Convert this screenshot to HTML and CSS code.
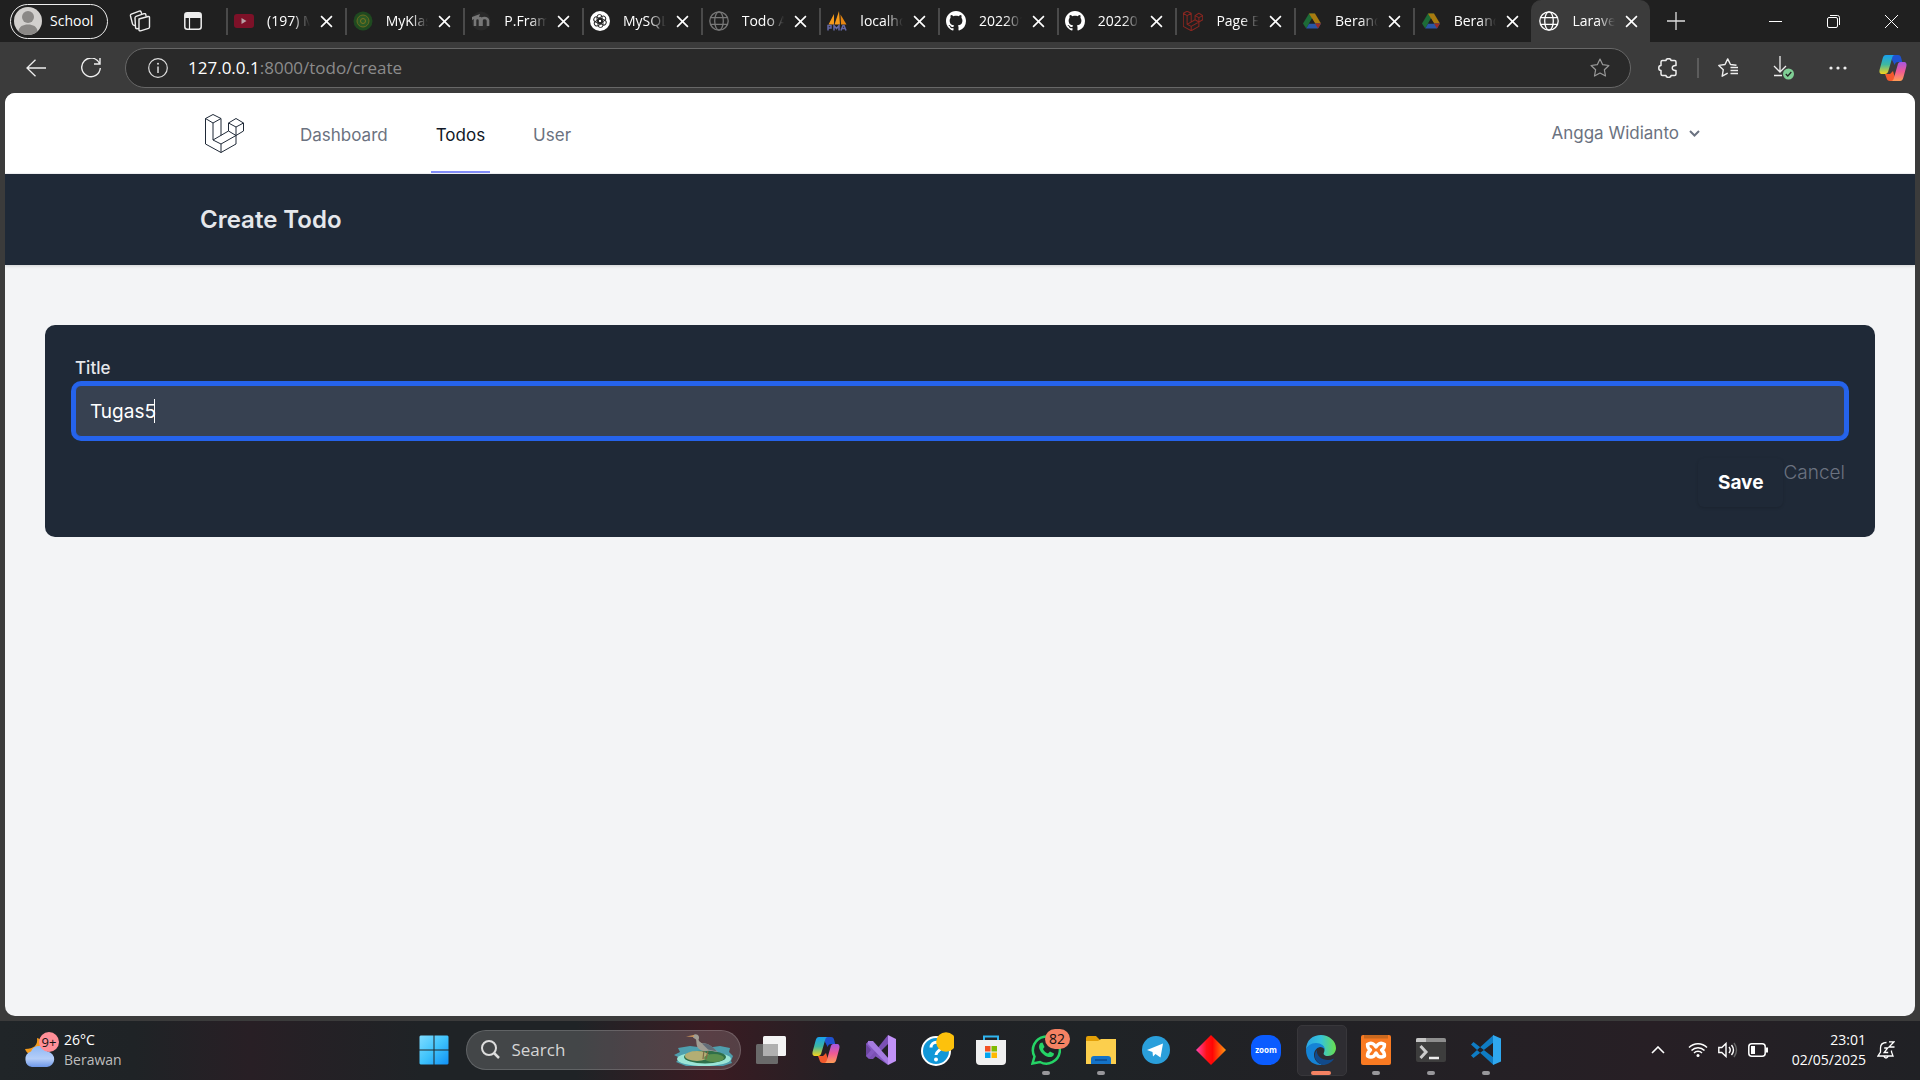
FILE: index.html
```html
<!DOCTYPE html>
<html lang="en">
<head>
<meta charset="utf-8">
<meta name="viewport" content="width=device-width, initial-scale=1">
<title>Laravel</title>
<link rel="stylesheet" href="styles.css">
</head>
<body>
<svg class="defs" width="0" height="0" aria-hidden="true">
  <defs>
    <symbol id="i-close" viewBox="0 0 12 12"><path d="M1 1l10 10M11 1L1 11" fill="none" stroke="currentColor" stroke-width="1.5"/></symbol>
    <symbol id="i-globe" viewBox="0 0 20 20"><g fill="none" stroke="currentColor" stroke-width="1.3"><circle cx="10" cy="10" r="9.2"/><ellipse cx="10" cy="10" rx="4.3" ry="9.2"/><path d="M1.6 6.6h16.8M1.6 13.4h16.8"/></g></symbol>
    <symbol id="i-github" viewBox="0 0 16 16"><path fill="currentColor" d="M8 0C3.58 0 0 3.58 0 8c0 3.54 2.29 6.53 5.47 7.59.4.07.55-.17.55-.38 0-.19-.01-.82-.01-1.49-2.01.37-2.53-.49-2.69-.94-.09-.23-.48-.94-.82-1.13-.28-.15-.68-.52-.01-.53.63-.01 1.08.58 1.23.82.72 1.21 1.87.87 2.33.66.07-.52.28-.87.51-1.07-1.78-.2-3.64-.89-3.64-3.95 0-.87.31-1.59.82-2.15-.08-.2-.36-1.02.08-2.12 0 0 .67-.21 2.2.82.64-.18 1.32-.27 2-.27s1.36.09 2 .27c1.53-1.04 2.2-.82 2.2-.82.44 1.1.16 1.92.08 2.12.51.56.82 1.27.82 2.15 0 3.07-1.87 3.75-3.65 3.95.29.25.54.73.54 1.48 0 1.07-.01 1.93-.01 2.2 0 .21.15.46.55.38A8.01 8.01 0 0 0 16 8c0-4.42-3.58-8-8-8z"/></symbol>
    <symbol id="i-drive" viewBox="0 0 20 20"><path d="M7 2.5h6L7.2 12.6l-3 5L1 12.600z" fill="#1d6b37"/><path d="M7 2.500h6l6 10.100h-6z" fill="#a87b10"/><path d="M4.200 17.600l3-5H19l-3 5z" fill="#2a55a5"/><path d="M13 12.600h6l-3 5z" fill="#9c2c24"/><path d="M10 7.500l3 5.100H7.100z" fill="#202020"/></symbol>
    <symbol id="i-laravel" viewBox="0 0 39 39"><path fill="none" stroke="currentColor" stroke-linejoin="round" d="M8 .5l8 4L8 9 .5 4.500zM.5 4.500V30L16 38.500 31 30V13M16 38.500V30M8 9v17l8 4 15-8.500M16 4.500v17M8 26l15.500-9M31 4.500l7.500 4.500L31 13l-7.500-4zM23.500 9v8l7.500 4.500 7.500-4.500V9"/></symbol>
    <linearGradient id="cp-a" x1="0" y1="0" x2="0" y2="1"><stop offset="0" stop-color="#18a0ee"/><stop offset=".5" stop-color="#3fb8a0"/><stop offset="1" stop-color="#f6d31b"/></linearGradient>
    <linearGradient id="cp-b" x1="0" y1="0" x2="0" y2="1"><stop offset="0" stop-color="#a556e0"/><stop offset=".5" stop-color="#ef5a95"/><stop offset="1" stop-color="#ff9d55"/></linearGradient>
    <symbol id="i-copilot" viewBox="0 0 28 26"><path d="M13 0h6c2 0 2.700 1.200 3.200 3l1 4h-4c-2 0-3 1-3.500 3L13 5z" fill="#1f52d0"/><path d="M6 19h5l3-3 3 10h-6c-2 0-3-1-3.500-3z" fill="#f2592d"/><path d="M7 0h9c-2 0-2.500 1.500-3 3.500l-3.500 12C9 17.500 8 19 6 19H3.500C.5 19 0 17 .8 14L3.500 4C4.200 1.500 5 0 7 0z" fill="url(#cp-a)"/><path d="M21.500 7h3c3 0 3.500 2 2.700 5l-2.700 10c-.7 2.500-1.500 4-3.500 4h-9c2 0 2.500-1.500 3-3.500l3.500-12C19 8.500 19.500 7 21.500 7z" fill="url(#cp-b)"/></symbol>
  </defs>
</svg>

<header class="browser">
  <div class="tabstrip">
    <button class="profile" type="button">
      <svg width="28" height="28" viewBox="0 0 28 28"><circle cx="14" cy="14" r="14" fill="#d2d0ce"/><circle cx="14" cy="10" r="6" fill="#8a8886"/><path d="M4.500 24.200C5 19.500 9 17.500 14 17.500s9 2 9.500 6.700A14 14 0 0 1 4.500 24.200z" fill="#8a8886"/></svg>
      <span>School</span>
    </button>
    <button class="strip-btn" type="button" aria-label="Workspaces"><svg width="22" height="22" viewBox="0 0 22 22" fill="none" stroke="#eee" stroke-width="1.400" stroke-linejoin="round"><path d="M10 9l9-2.500q1.500-.3 1.500 1V17q0 1-1 1.400l-8 2.400q-1.500.3-1.500-1z"/><path d="M10 18.500l-2 .2q-1.500 0-1.500-1.500L6 8q0-1.300 1-1.700l8-2.600q1.500-.4 1.800.8l.3 2"/><path d="M6.500 15.500l-1.500-.2q-1.200-.3-1.500-1.500L1.500 6q-.3-1.300.8-1.900l8-3q1.300-.4 1.800.8l.6 2"/></svg></button>
    <button class="strip-btn" type="button" aria-label="Tab actions"><svg width="18" height="18" viewBox="0 0 18 18"><rect x=".8" y=".8" width="16.400" height="16.400" rx="2.500" fill="none" stroke="#eee" stroke-width="1.500"/><path d="M1 1h16v5H1z" fill="#eee"/><path d="M5.500 6v11" stroke="#eee" stroke-width="1.200"/></svg></button>
    <nav class="tabs" aria-label="Tabs">
      <div class="tab"><svg class="fav" viewBox="0 0 20 20"><rect y="3" width="20" height="14" rx="3" fill="#7d1128"/><path d="M7.500 7v6l5-3z" fill="#b9a0a5"/></svg><span class="tab-title">(197) MySQL</span><button class="tab-close" type="button" aria-label="Close tab"><svg><use href="#i-close"/></svg></button></div>
      <div class="tab"><svg class="fav" viewBox="0 0 20 20"><circle cx="10" cy="10" r="9.500" fill="#1f4a20"/><circle cx="10" cy="10" r="6" fill="#2b5a26" stroke="#6b6a20"/><circle cx="10" cy="10" r="2.500" fill="none" stroke="#7a7320"/></svg><span class="tab-title">MyKlass</span><button class="tab-close" type="button" aria-label="Close tab"><svg><use href="#i-close"/></svg></button></div>
      <div class="tab"><svg class="fav" viewBox="0 0 20 20"><circle cx="10" cy="10" r="9.500" fill="#292929"/><path d="M4 15V9.500Q4 7 6.500 7T9 9.500V15M10.500 15V9.500Q10.500 7 8.500 7M10.500 15V9.500Q10.500 7 13.500 7T17 9.500V15" fill="none" stroke="#777" stroke-width="2.600"/><path d="M1 6l8-3-1 3-7 3z" fill="#777"/></svg><span class="tab-title">P.Framework</span><button class="tab-close" type="button" aria-label="Close tab"><svg><use href="#i-close"/></svg></button></div>
      <div class="tab"><svg class="fav" viewBox="0 0 20 20"><circle cx="10" cy="10" r="10" fill="#fff"/><g fill="none" stroke="#222" stroke-width=".9"><rect x="7" y="3.500" width="5" height="8.500" rx="2.500"/><rect x="7" y="3.500" width="5" height="8.500" rx="2.500" transform="rotate(60 10 10)"/><rect x="7" y="3.500" width="5" height="8.500" rx="2.500" transform="rotate(120 10 10)"/><rect x="7" y="3.500" width="5" height="8.500" rx="2.500" transform="rotate(180 10 10)"/><rect x="7" y="3.500" width="5" height="8.500" rx="2.500" transform="rotate(240 10 10)"/><rect x="7" y="3.500" width="5" height="8.500" rx="2.500" transform="rotate(300 10 10)"/></g></svg><span class="tab-title">MySQL</span><button class="tab-close" type="button" aria-label="Close tab"><svg><use href="#i-close"/></svg></button></div>
      <div class="tab"><svg class="fav dim"><use href="#i-globe"/></svg><span class="tab-title">Todo App</span><button class="tab-close" type="button" aria-label="Close tab"><svg><use href="#i-close"/></svg></button></div>
      <div class="tab"><svg class="fav" viewBox="0 0 20 20"><path d="M1.500 13.500L7 3v10.500zM7.500 13.500L12 0l1 13.500z" fill="#f59a1b"/><path d="M13.500 3.500L19.500 13.500H14z" fill="#e5850f"/><path d="M1 19.500v-5h3v2.500H1M7 19.500v-5l2.500 3 2.500-3v5M14 19.500l2-5h1l2 5M14.500 17.500h4" fill="none" stroke="#6468a5" stroke-width="1.500"/></svg><span class="tab-title">localhost</span><button class="tab-close" type="button" aria-label="Close tab"><svg><use href="#i-close"/></svg></button></div>
      <div class="tab"><svg class="fav"><use href="#i-github"/></svg><span class="tab-title">2022010</span><button class="tab-close" type="button" aria-label="Close tab"><svg><use href="#i-close"/></svg></button></div>
      <div class="tab"><svg class="fav"><use href="#i-github"/></svg><span class="tab-title">2022010</span><button class="tab-close" type="button" aria-label="Close tab"><svg><use href="#i-close"/></svg></button></div>
      <div class="tab"><svg class="fav laravel-red"><use href="#i-laravel"/></svg><span class="tab-title">Page Expired</span><button class="tab-close" type="button" aria-label="Close tab"><svg><use href="#i-close"/></svg></button></div>
      <div class="tab"><svg class="fav"><use href="#i-drive"/></svg><span class="tab-title">Beranda</span><button class="tab-close" type="button" aria-label="Close tab"><svg><use href="#i-close"/></svg></button></div>
      <div class="tab"><svg class="fav"><use href="#i-drive"/></svg><span class="tab-title">Beranda</span><button class="tab-close" type="button" aria-label="Close tab"><svg><use href="#i-close"/></svg></button></div>
      <div class="tab active"><svg class="fav"><use href="#i-globe"/></svg><span class="tab-title">Laravel</span><button class="tab-close" type="button" aria-label="Close tab"><svg><use href="#i-close"/></svg></button></div>
    </nav>
    <button class="strip-btn newtab" type="button" aria-label="New tab"><svg width="18" height="18" viewBox="0 0 18 18"><path d="M9 0v18M0 9h18" stroke="#ddd" stroke-width="1.300"/></svg></button>
    <div class="window-controls">
      <button type="button" aria-label="Minimize"><svg width="13" height="13" viewBox="0 0 13 13"><path d="M0 6.500h13" stroke="#fff"/></svg></button>
      <button type="button" aria-label="Restore"><svg width="13" height="13" viewBox="0 0 13 13" fill="none" stroke="#fff"><rect x=".5" y="2.500" width="10" height="10" rx="1.500"/><path d="M3 .5h7.500q2 0 2 2V10"/></svg></button>
      <button type="button" aria-label="Close"><svg width="13" height="13" viewBox="0 0 13 13"><path d="M0 0l13 13M13 0L0 13" stroke="#fff"/></svg></button>
    </div>
  </div>
  <div class="toolbar">
    <button class="tool" type="button" aria-label="Back"><svg width="20" height="18" viewBox="0 0 20 18" fill="none" stroke="#eee" stroke-width="1.300"><path d="M20 9H1M9.500 .8L1 9l8.500 8.200"/></svg></button>
    <button class="tool" type="button" aria-label="Refresh"><svg width="20" height="20" viewBox="0 0 20 20" fill="none" stroke="#eee" stroke-width="1.400"><path d="M18.500 5.500A9.300 9.300 0 1 0 19.300 10M19 0v6h-6"/></svg></button>
    <div class="address">
      <svg width="20" height="20" viewBox="0 0 20 20"><circle cx="10" cy="10" r="9.300" fill="none" stroke="#ddd" stroke-width="1.200"/><path d="M10 8.500V15" stroke="#ddd" stroke-width="1.500"/><circle cx="10" cy="5.800" r="1" fill="#ddd"/></svg>
      <span class="url"><span class="host">127.0.0.1</span>:8000/todo/create</span>
      <svg width="20" height="20" viewBox="0 0 20 20"><path d="M10 1l2.700 5.700 6.200.8-4.500 4.300 1.100 6.200L10 15l-5.500 3 1.100-6.200L1.100 7.500l6.200-.8z" fill="none" stroke="#999" stroke-width="1.200" stroke-linejoin="round"/></svg>
    </div>
    <div class="tools">
      <button class="tool" type="button" aria-label="Extensions"><svg width="20" height="20" viewBox="0 0 20 20" fill="none" stroke="#eee" stroke-width="1.500" stroke-linejoin="round"><path d="M4.500 2.500H8C8 0 13 0 13 2.500h3.500q1.500 0 1.500 1.500v3.500c-5-.8-5 5.800 0 5V16q0 1.500-1.500 1.500H13c0 2.500-5 2.500-5 0H4.500Q3 17.500 3 16v-3.500c-3 0-3-5 0-5V4q0-1.500 1.500-1.500z"/></svg></button>
      <span class="divider"></span>
      <button class="tool" type="button" aria-label="Favorites"><svg width="20" height="20" viewBox="0 0 20 20" fill="none" stroke="#eee" stroke-width="1.400" stroke-linejoin="round"><path d="M18.500 7.200L12.500 6.500 9.700.9 7 6.500.8 7.400l4.500 4.300-1.100 6.500 5.500-3M12.500 9.500H20M12.500 12.500H20M12.500 15.500H20"/></svg></button>
      <button class="tool" type="button" aria-label="Downloads"><svg width="24" height="26" viewBox="0 0 24 26"><path d="M9 1v15M3 11l6 6 6-6M3 20.500h8" fill="none" stroke="#eee" stroke-width="1.300"/><circle cx="17.500" cy="19" r="5.500" fill="#7fcf95"/><path d="M14.800 19l2 2 3.500-4" fill="none" stroke="#222" stroke-width="1.200"/></svg></button>
      <button class="tool" type="button" aria-label="Settings and more"><svg width="18" height="4" viewBox="0 0 18 4" fill="#eee"><circle cx="2" cy="2" r="1.600"/><circle cx="9" cy="2" r="1.600"/><circle cx="16" cy="2" r="1.600"/></svg></button>
      <button class="tool" type="button" aria-label="Copilot"><svg width="28" height="26"><use href="#i-copilot"/></svg></button>
    </div>
  </div>
</header>

<div class="viewport">
  <nav class="site-nav">
    <div class="container nav-row">
      <a class="logo" href="#" aria-label="Home"><svg width="39" height="39"><use href="#i-laravel"/></svg></a>
      <a class="nav-link" href="#">Dashboard</a>
      <a class="nav-link current" href="#" aria-current="page">Todos</a>
      <a class="nav-link" href="#">User</a>
      <button class="user-menu" type="button">Angga Widianto <svg width="11" height="7" viewBox="0 0 11 7"><path d="M1 1l4.500 4.500L10 1" fill="none" stroke="currentColor" stroke-width="2"/></svg></button>
    </div>
  </nav>
  <div class="page-header"><div class="container"><h1>Create Todo</h1></div></div>
  <main>
    <form class="card" onsubmit="return false">
      <label for="title">Title</label>
      <div class="field"><input id="title" type="text" value="Tugas5" autocomplete="off"><span class="caret"></span></div>
      <div class="actions"><button class="save" type="submit">Save</button><a class="cancel" href="#">Cancel</a></div>
    </form>
  </main>
</div>

<footer class="taskbar">
  <div class="weather">
    <svg width="36" height="38" viewBox="0 0 36 38"><defs><linearGradient id="cl" x1="0" y1="0" x2="0" y2="1"><stop offset="0" stop-color="#8fb8f5"/><stop offset=".6" stop-color="#b5cef8"/><stop offset="1" stop-color="#6d97e8"/></linearGradient></defs><path d="M14 7c1 7-3 11-12 11 2 5 5 6 9 6l9-9c0-4-2-7-6-8z" fill="#f39a1c"/><path d="M9 36a8 8 0 0 1-1-15.500 9 9 0 0 1 16.500 0A7.800 7.800 0 0 1 24 36z" fill="url(#cl)"/><circle cx="26" cy="11" r="10" fill="#ff8f98"/><text x="26" y="16" text-anchor="middle" font-size="13" fill="#111">9+</text></svg>
    <div class="weather-text"><span>26°C</span><span class="muted">Berawan</span></div>
  </div>
  <div class="dock">
    <button class="app" type="button" aria-label="Start"><svg width="30" height="30" viewBox="0 0 30 30"><defs><linearGradient id="wn" x1="0" y1="0" x2="1" y2="1"><stop offset="0" stop-color="#7fdcff"/><stop offset=".5" stop-color="#3fc3fc"/><stop offset="1" stop-color="#1090f5"/></linearGradient></defs><path d="M1.500.5H14.500V14.500H.5V1.500zM15.500.5h13l1 1v13h-14zM.5 15.500h14v14h-13l-1-1zM15.500 15.500h14v13l-1 1h-13z" fill="url(#wn)"/></svg></button>
    <button class="search" type="button">
      <svg width="19" height="19" viewBox="0 0 19 19" fill="none" stroke="#ddd" stroke-width="2"><circle cx="8" cy="8" r="7"/><path d="M13 13l5 5" stroke-width="2.500"/></svg>
      <span>Search</span>
      <svg width="60" height="34" viewBox="0 0 60 34"><path d="M4 15l12-2 16 2 14-2 10 2-1 4 4 4-2 5 1 2-9 3H12L2 29l4-4-6-3 6-3z" fill="#4f9fae"/><ellipse cx="30" cy="26" rx="27" ry="7" fill="#9be5d6"/><ellipse cx="31" cy="24" rx="21" ry="6.500" fill="#2f6f49"/><ellipse cx="23" cy="23" rx="12" ry="5" fill="#b3ae74"/><ellipse cx="40" cy="25" rx="10" ry="4" fill="#5a8f4e"/><path d="M30 17l-1 9M34 18l-2 8" stroke="#7d6b46" stroke-width="1.200"/><path d="M19 2.500q2-1.800 4.500-.8 2.500 1.800 1 5 0 1.500 3 3.300 6 0 10 3.500l6.500 5.500-9-1.500c-6 2-11-1-12-4.500-.8-2.500-.5-4.500-1-6.500l-3-2z" fill="#a09d93"/><path d="M28 10.500c5-.8 9 2 15 8l-9-2z" fill="#626d78"/><path d="M12 3.500l8-1.500v2z" fill="#c9955c"/></svg>
    </button>
    <button class="app" type="button" aria-label="Task view"><svg width="30" height="30" viewBox="0 0 30 30"><rect y="9" width="22" height="20" rx="1.500" fill="#6a6a6a"/><rect x="7" y="1" width="23" height="20" rx="1.500" fill="#f4f4f4"/><path d="M7 9h15v12H7z" fill="#b0b0b0"/></svg></button>
    <button class="app" type="button" aria-label="Copilot"><svg width="28" height="26"><use href="#i-copilot"/></svg></button>
    <button class="app" type="button" aria-label="Visual Studio"><svg width="30" height="30" viewBox="0 0 30 30"><path d="M0 9l3-3 9 7.500L4 24l-4-3z" fill="#6b45a0"/><path d="M0 9l3-3.500L22 30 7 19.500 3 24 0 21l5-6z" fill="#8458c0"/><path d="M3 24l19-24v9L7 24z" fill="#7b50b5"/><path d="M2 6h5l16 18-1 6L2 9z" fill="#a57be0"/><path d="M22 0l8 4v22l-8 4z" fill="#c292f8"/></svg></button>
    <button class="app" type="button" aria-label="Get Help"><svg width="36" height="36" viewBox="0 0 36 36"><circle cx="18" cy="19" r="14" fill="#1197d8" stroke="#fff" stroke-width="2"/><path d="M13 15.500c0-7 11-7 10 0-.5 3.500-5 3.500-5 7.500" fill="none" stroke="#fff" stroke-width="3"/><circle cx="18" cy="27.500" r="2" fill="#fff"/><circle cx="28" cy="10" r="9.800" fill="#fdc10c"/></svg></button>
    <button class="app" type="button" aria-label="Store"><svg width="30" height="30" viewBox="0 0 30 30"><path d="M8 6V1.500h14V6" fill="none" stroke="#30b5f0" stroke-width="2"/><path d="M0 5h30v21q0 4-4 4H4q-4 0-4-4z" fill="#f0f0f0"/><path d="M9 11h5.500v5.500H9z" fill="#f25022"/><path d="M15.500 11H21v5.500h-5.500z" fill="#7fba00"/><path d="M9 17.500h5.500V23H9z" fill="#00a4ef"/><path d="M15.500 17.500H21V23h-5.500z" fill="#ffb900"/></svg></button>
    <button class="app running" type="button" aria-label="WhatsApp"><svg width="30" height="30" viewBox="0 0 30 30"><path d="M1.500 28.500l2-7A13.500 13.500 0 1 1 9 27z" fill="#1f2326" stroke="#25d366" stroke-width="2.500"/><path d="M9.500 8l2-.500 2 4.500-1.500 2c1 2 2.500 3.500 5 4.500l2-2 4 2c0 3-3 4-5.500 3.500C13 21 8.500 16.500 8 12c0-1.500.5-3 1.500-4z" fill="#25d366"/></svg><span class="badge">82</span></button>
    <button class="app running" type="button" aria-label="File Explorer"><svg width="30" height="28" viewBox="0 0 30 28"><path d="M0 2q0-2 2-2h8l4 4v4H0z" fill="#e3a008"/><path d="M0 5h12l3-2h15v25H0z" fill="#fccf4d"/><path d="M5 28v-5q0-3 3-3h14q3 0 3 3v5z" fill="#1473c8"/><path d="M9 24h12" stroke="#0b4a8f" stroke-width="1.500"/></svg></button>
    <button class="app" type="button" aria-label="Telegram"><svg width="28" height="28" viewBox="0 0 28 28"><circle cx="14" cy="14" r="14" fill="#2a9fdb"/><path d="M5 14l16-6.500-2.500 14-5-3.500-2.500 2.500-.5-4.500z" fill="#fff"/></svg></button>
    <button class="app" type="button" aria-label="Diamond"><svg width="30" height="30" viewBox="0 0 30 30"><defs><linearGradient id="dm"><stop offset="0" stop-color="#ff45b0"/><stop offset=".35" stop-color="#ff1218"/><stop offset=".55" stop-color="#ff0505"/><stop offset="1" stop-color="#ff9a10"/></linearGradient></defs><path d="M15 0l15 15-15 15L0 15z" fill="url(#dm)"/></svg></button>
    <button class="app" type="button" aria-label="Zoom"><svg width="30" height="30" viewBox="0 0 30 30"><rect width="30" height="30" rx="12" fill="#0b5cff"/><text x="15" y="18" text-anchor="middle" font-size="8" font-weight="700" fill="#fff">zoom</text></svg></button>
    <button class="app selected" type="button" aria-label="Edge"><svg width="30" height="30" viewBox="0 0 30 30"><defs><linearGradient id="eg"><stop offset="0" stop-color="#2aa5e5"/><stop offset=".5" stop-color="#36c3d8"/><stop offset="1" stop-color="#6ae04b"/></linearGradient></defs><path d="M0 15C0 5 7 0 15 0s15 6 15 13c0 5-4 8-8 8-4 0-5-2-4-3.500C20 13 16 9 11 9 5 9 1 12 0 15z" fill="url(#eg)"/><path d="M0 15C1 11 5 8 10 8c5 0 9 3 9 7-1-2-3-3-5-3-4 1-6 4-6 8 0 5 4 9 9 9.800C6 31 0 24 0 15z" fill="#1583d6"/><path d="M11 15c-1 6 5 10 11 10 2 0 4-.5 6-1.500-2 4-7 6.500-11.500 6.500C10 28 6 20 11 15z" fill="#114a8b"/></svg></button>
    <button class="app running" type="button" aria-label="XAMPP"><svg width="30" height="30" viewBox="0 0 30 30"><rect width="30" height="30" rx="2" fill="#f97a22"/><path d="M3 0h24v3.500H3z" fill="#c9681e"/><path d="M6.500 9.500Q10 7 13 9.500L15 12l2-2.500Q20 7 23.500 9.500q0 4-3 5.500 3 2 3 6-3.500 2-6.500 0L15 18l-2 3q-3 2-6.500 0 0-4 3-6-3-1.500-3-5.500z" fill="none" stroke="#fff" stroke-width="3.400" stroke-linejoin="round"/></svg></button>
    <button class="app running" type="button" aria-label="Terminal"><svg width="30" height="24" viewBox="0 0 30 24"><rect width="30" height="24" rx="2" fill="#3d3d3d"/><path d="M0 4V2q0-2 2-2h26q2 0 2 2v2z" fill="#8e8e8e"/><path d="M0 4V2q0-2 2-2h8v4z" fill="#c5c5c5"/><path d="M4.500 8l5.500 6-5.500 6" fill="none" stroke="#ccc" stroke-width="3"/><path d="M13 20h10" stroke="#eee" stroke-width="2.500"/></svg></button>
    <button class="app running" type="button" aria-label="VS Code"><svg width="30" height="30" viewBox="0 0 30 30"><path d="M0 9.500L2.500 7l20 15.500V30zM0 20.500L2.500 23l20-15.500V0z" fill="#0f7cc4"/><path d="M22 0l8 3.500v23L22 30z" fill="#2fa8f0"/></svg></button>
  </div>
  <div class="tray">
    <svg width="14" height="8" viewBox="0 0 14 8"><path d="M1 7l6-6 6 6" fill="none" stroke="#fff" stroke-width="1.600"/></svg>
    <div class="status">
      <svg width="20" height="16" viewBox="0 0 20 16" fill="none" stroke="#fff" stroke-width="1.500"><path d="M1 5.500a12.700 12.700 0 0 1 18 0M3.500 8.500a9 9 0 0 1 13 0M6 11a5.700 5.700 0 0 1 8 0"/><circle cx="10" cy="13.500" r="1.500" fill="#fff" stroke="none"/></svg>
      <svg width="20" height="16" viewBox="0 0 20 16" fill="none" stroke="#fff" stroke-width="1.400"><path d="M.8 5.500h3L8 1.500v13l-4.200-4h-3zM11 5q2.500 3 0 6M13.500 3q4 5 0 10"/><path d="M16 1q5 7 0 14" stroke="#666"/></svg>
      <svg width="20" height="14" viewBox="0 0 20 14"><rect x=".8" y=".8" width="16.400" height="12.400" rx="3" fill="none" stroke="#fff" stroke-width="1.500"/><path d="M3 3h4v8H3zM18 4.500h2v5h-2z" fill="#fff"/></svg>
    </div>
    <div class="clock"><span>23:01</span><span>02/05/2025</span></div>
    <svg width="18" height="18" viewBox="0 0 18 18" fill="none" stroke="#fff" stroke-width="1.300"><path d="M9.500 1.500C5.500 1.500 3.500 4 3.500 7v4L1 15h15l-1.500-4V9.500M6.500 15q2.500 4 5 0M12 .8h5L12 6h5.500M7.200 7h3.500l-3.500 4.500h4"/></svg>
  </div>
</footer>
</body>
</html>
```
FILE: styles.css
```css
* { box-sizing: border-box; }

body {
  margin: 0;
  min-height: 100vh;
  display: flex;
  flex-direction: column;
  background: #3b3b3b;
  color: #fff;
  font-family: "Open Sans", "Noto Sans", sans-serif;
  font-size: 14px;
}

button {
  margin: 0;
  padding: 0;
  border: 0;
  background: none;
  color: inherit;
  font: inherit;
}

a { color: inherit; text-decoration: none; }
svg { display: block; flex: none; }
.defs { position: absolute; }

/* Browser tab strip */
.tabstrip {
  display: flex;
  align-items: center;
  height: 42px;
  padding-left: 10px;
  background: #202020;
}

.profile {
  display: flex;
  align-items: center;
  gap: 8px;
  width: 98px;
  height: 35px;
  padding-left: 3px;
  border: 1px solid #eee;
  border-radius: 18px;
  line-height: 20px;
}

.strip-btn {
  display: grid;
  place-items: center;
  width: 53px;
  height: 42px;
  flex: none;
}

.profile + .strip-btn { margin-left: 5px; }

.tabs {
  display: flex;
  flex: 1;
  min-width: 0;
  align-self: stretch;
  margin-left: 7px;
}

.tab {
  display: flex;
  flex: 1;
  min-width: 0;
  align-items: center;
  padding: 0 12px 0 6px;
  border-left: 2px solid #4a4a4a;
  border-image: linear-gradient(transparent 9px, #4a4a4a 9px, #4a4a4a 34px, transparent 34px) 1;
  border-width: 0 0 0 2px;
}

.tab.active {
  border-image: none;
  border-color: #3b3b3b;
  border-radius: 10px 10px 0 0;
  background: #3b3b3b;
}

.fav { width: 20px; height: 20px; }
.fav.dim { color: #777; }
.laravel-red { color: #8a2620; stroke-width: 2; }

.tab-title {
  flex: 1;
  min-width: 0;
  margin: 0 10px 0 13px;
  overflow: hidden;
  white-space: nowrap;
  line-height: 20px;
  mask-image: linear-gradient(90deg, #000 60%, transparent);
}

.tab-close svg { width: 13px; height: 13px; }

.newtab { width: 52px; }

.window-controls { display: flex; margin-left: 44px; }

.window-controls button {
  display: grid;
  place-items: center;
  width: 58px;
  height: 42px;
}

/* Browser toolbar */
.toolbar {
  display: flex;
  align-items: center;
  height: 51px;
  padding-left: 8px;
}

.tool {
  display: grid;
  place-items: center;
  width: 55px;
  height: 40px;
}

.address {
  display: flex;
  align-items: center;
  gap: 20px;
  flex: 1;
  height: 40px;
  margin-left: 7px;
  padding: 0 20px 0 22px;
  border: 1px solid #676767;
  border-radius: 20px;
  background: #292929;
}

.url { flex: 1; font-size: 17px; line-height: 24px; color: #8c8c8c; }
.host { color: #fff; }

.tools { display: flex; align-items: center; padding-left: 9px; }
.divider { width: 2px; height: 20px; margin: 0 1px 0 2px; background: #5c5c5c; }

/* Web page */
.viewport {
  flex: 1;
  margin: 0 5px 5px;
  border-radius: 10px;
  overflow: hidden;
  background: #f3f4f6;
  font-family: Inter, "Open Sans", sans-serif;
}

.container { max-width: 1600px; margin: 0 auto; padding: 0 40px; }
.site-nav { background: #fff; border-bottom: 1px solid #f3f4f6; }
.nav-row { display: flex; align-items: stretch; height: 80px; gap: 38px; }
.logo { display: grid; place-items: center; padding: 0 13px 0 5px; color: #1f2937; }

.nav-link {
  display: flex;
  align-items: center;
  padding: 6px 5px 0;
  border-bottom: 2px solid transparent;
  color: #6b7280;
  font-size: 17px;
}

.nav-link.current { border-color: #818cf8; color: #111827; }

.user-menu {
  display: flex;
  align-items: center;
  gap: 10px;
  margin-left: auto;
  padding-right: 20px;
  color: #6b7280;
  font-size: 17px;
}

.page-header {
  padding: 30px 0;
  background: #1f2937;
  box-shadow: 0 1px 3px rgba(0, 0, 0, .15);
}

.page-header h1 {
  margin: 0;
  color: #e5e7eb;
  font-size: 24px;
  font-weight: 600;
  line-height: 31px;
}

main { padding: 60px 40px; }

.card {
  padding: 30px;
  border-radius: 10px;
  background: #1f2937;
}

.card label {
  display: block;
  padding-top: 1px;
  color: #e5e7eb;
  font-size: 17px;
  font-weight: 500;
  line-height: 25px;
}

.field { position: relative; margin-top: 4px; }

.field input {
  display: block;
  width: 100%;
  height: 52px;
  padding: 0 14px;
  border: 1px solid #2563eb;
  border-radius: 6px;
  outline: 0;
  background: #374151;
  box-shadow: 0 0 0 4px #2563eb;
  color: #fff;
  font: 19px Inter, "Open Sans", sans-serif;
}

.caret {
  position: absolute;
  top: 14px;
  left: 79px;
  width: 1px;
  height: 24px;
  background: #fff;
}

.actions {
  display: flex;
  justify-content: flex-end;
  align-items: flex-start;
  margin-top: 21px;
}

.save {
  height: 49px;
  padding: 0 20px;
  border-radius: 6px;
  box-shadow: 0 1px 3px rgba(0, 0, 0, .15);
  font-size: 19px;
  font-weight: 700;
}

.cancel { color: #6b7280; font-size: 19px; font-weight: 300; line-height: 30px; }

/* Taskbar */
.taskbar {
  display: grid;
  grid-template-columns: 1fr auto 1fr;
  align-items: center;
  height: 59px;
  padding-bottom: 2px;
  background: linear-gradient(90deg, #202528 0%, #1f2326 7%, #281f25 13%, #1f2326 22%, #1f2326 30%, #3a1b22 37%, #222125 44%, #1f2326 57%, #222125 70%, #271f25 86%, #202125 100%);
}

.weather { display: flex; align-items: center; gap: 5px; padding-left: 23px; }
.weather-text, .clock { display: grid; font-size: 14px; line-height: 20px; }
.muted { color: #bdbdbd; }

.dock { display: flex; align-items: center; }

.app {
  position: relative;
  display: grid;
  place-items: center;
  width: 55px;
  height: 57px;
}

.search {
  display: flex;
  align-items: center;
  gap: 12px;
  width: 275px;
  height: 40px;
  margin: 0 3px 0 4px;
  padding: 0 6px 0 14px;
  border: 1px solid rgba(255, 255, 255, .16);
  border-radius: 20px;
  background: rgba(255, 255, 255, .16);
  color: #d5d5d5;
  font-size: 17px;
}

.search span { flex: 1; text-align: left; }

.running::after,
.selected::after {
  content: "";
  position: absolute;
  bottom: 3px;
  left: 23px;
  width: 8px;
  height: 4px;
  border-radius: 2px;
  background: #98979b;
}

.selected::after { left: 17px; width: 20px; background: #f58263; }

.selected::before {
  content: "";
  position: absolute;
  inset: 4px 2px 2px 3px;
  border: 1px solid #38373b;
  border-radius: 5px;
  background: #2e2d32;
}

.selected svg { position: relative; }

.badge {
  position: absolute;
  top: 8px;
  left: 26px;
  width: 25px;
  height: 20px;
  border-radius: 10px;
  background: #f58263;
  color: #111;
  line-height: 20px;
}

.tray {
  display: flex;
  align-items: center;
  justify-content: flex-end;
  padding-right: 25px;
}

.status { display: flex; align-items: center; gap: 10px; margin: 0 20px 0 23px; }
.clock { min-width: 78px; margin-right: 11px; text-align: right; }
```
